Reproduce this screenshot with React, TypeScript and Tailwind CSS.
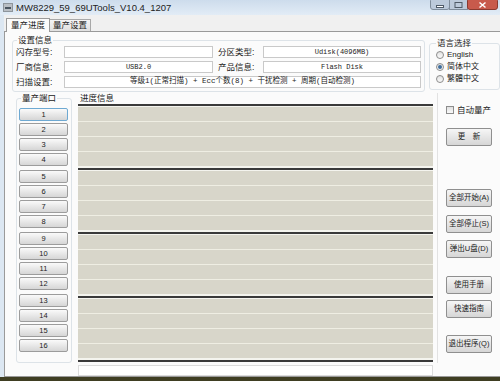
import React from "react"

const sans = "font-['Liberation_Sans','Noto_Sans_CJK_SC',sans-serif]"
const mono = "font-['Liberation_Mono','Noto_Sans_CJK_SC',monospace]"

function PortBtn({ n, focused }: { n: number; focused?: boolean }) {
  return (
    <div
      className={`h-[13px] w-[49px] flex items-center justify-center rounded-[2px] border ${
        focused ? "border-[#6ea9d2]" : "border-[#9c9c9c]"
      } bg-linear-to-b from-[#fafafa] to-[#d6d6d6] text-[7.5px] leading-none text-[#222]`}
    >
      {n}
    </div>
  )
}

function ActionBtn({ label, className = "" }: { label: string; className?: string }) {
  return (
    <div
      className={`h-[18px] w-[46px] flex items-center justify-center rounded-[2px] border border-[#8f8f8f] bg-linear-to-b from-[#f6f6f6] to-[#d6d6d6] text-[7.5px] leading-none text-[#222] whitespace-nowrap ${className}`}
    >
      {label}
    </div>
  )
}

function ProgressGroup() {
  return (
    <div className="flex flex-col">
      <div className="h-[2px] bg-[#3a3a3a]" />
      <div className="h-[1px] bg-[#f4f4ee]" />
      {[0, 1, 2, 3].map((i) => (
        <div key={i} className="flex flex-col">
          <div className="h-[14px] bg-[#d8d6ca]" />
          {i < 3 && <div className="h-[1px] bg-[#efeee3]" />}
        </div>
      ))}
      <div className="h-[2px] bg-[#f4f4ee]" />
    </div>
  )
}

function Radio({ label, checked }: { label: string; checked?: boolean }) {
  return (
    <div className="flex items-center h-[12px]">
      <div className="w-[8px] h-[8px] rounded-full border border-[#8c8c8c] bg-linear-to-b from-[#e2e2e2] to-[#fafafa] flex items-center justify-center">
        {checked && <div className="w-[4px] h-[4px] rounded-full bg-[#3e6d9c]" />}
      </div>
      <span className="ml-[3px] text-[8px] leading-none text-[#222]">{label}</span>
    </div>
  )
}

function WindowControls() {
  return (
    <svg width="68" height="10" viewBox="0 0 68 10" className="shrink-0 block">
      <rect x="0.5" y="-2" width="19" height="11.5" rx="2.5" fill="#bccadb" stroke="#7f8d9c" />
      <rect x="19.5" y="-2" width="18" height="11.5" fill="#bccadb" stroke="#7f8d9c" />
      <rect x="37.5" y="-2" width="30" height="11.5" rx="2.5" fill="#c85a4c" stroke="#8a3a30" />
      <rect x="6.5" y="5.5" width="7" height="2" fill="#fff" stroke="#4f5b68" />
      <rect x="25" y="2.5" width="7" height="5" fill="none" stroke="#4f5b68" />
      <path d="M49.5 2.5 L55.5 7.5 M55.5 2.5 L49.5 7.5" stroke="#fff" strokeWidth="1.5" />
    </svg>
  )
}

export default function App() {
  const groups = [
    [1, 2, 3, 4],
    [5, 6, 7, 8],
    [9, 10, 11, 12],
    [13, 14, 15, 16],
  ]

  return (
    <div className={`w-[500px] h-[381px] overflow-hidden bg-[#3f3e22] flex flex-col ${sans}`}>
      <div className="h-[377px] bg-[#dce7f2] flex flex-col">
        {/* Title bar */}
        <div className="h-[15px] shrink-0 flex justify-between items-start bg-linear-to-b from-[#cddcec] to-[#e2ecf6] pr-[2px]">
          <div className="flex items-start">
            <div className="mt-[3px] ml-[3px] w-[10px] h-[9px] bg-[#b9bec4] border border-[#8d949b] flex items-center justify-center">
              <div className="w-[6px] h-[2px] bg-[#4a5560]" />
            </div>
            <span className="ml-[3px] mt-[2px] text-[9.5px] leading-[11px] text-[#222]">MW8229_59_69UTools_V10.4_1207</span>
          </div>
          <WindowControls />
        </div>

        {/* Client */}
        <div className="flex-1 flex flex-col bg-[#f0f0f0] ml-[4px] pt-[2px]">
          {/* Tabs */}
          <div className="flex items-end h-[14px] pl-[2px]">
            <div className="h-[14px] px-[4px] border border-b-0 border-[#9a9a9a] bg-[#fbfbfb] text-[8.5px] leading-[13px] text-[#222] relative top-[1px]">
              量产进度
            </div>
            <div className="h-[12px] px-[3px] border border-b-0 border-l-0 border-[#a8a8a8] bg-linear-to-b from-[#f4f4f4] to-[#e0e0e0] text-[8.5px] leading-[11px] text-[#222]">
              量产设置
            </div>
          </div>

          {/* Panel */}
          <div className="flex-1 flex flex-col border border-r-0 border-[#9a9a9a] bg-[#fbfbfb]">
            {/* Top section */}
            <div className="h-[61px] flex items-start">
              <fieldset className="ml-[7px] mt-[3px] w-[412px] h-[57px] border border-[#dde3e8] rounded-[3px] px-[3px]">
                <legend className="ml-[1px] px-[1px] text-[8.5px] leading-[10px] text-[#222]">设置信息</legend>
                <div className="flex flex-col gap-[3px] mt-[1px] text-[8.5px] text-[#222]">
                  <div className="flex items-center h-[12px]">
                    <span className="w-[48px] leading-none">闪存型号:</span>
                    <div className="w-[149px] h-[12px] border border-[#c9c9c9] bg-white" />
                    <span className="ml-[5px] w-[45px] leading-none">分区类型:</span>
                    <div className={`w-[158px] h-[12px] border border-[#c9c9c9] bg-white flex items-center justify-center text-[7px] leading-none ${mono}`}>
                      Udisk(4096MB)
                    </div>
                  </div>
                  <div className="flex items-center h-[12px]">
                    <span className="w-[48px] leading-none">厂商信息:</span>
                    <div className={`w-[149px] h-[12px] border border-[#c9c9c9] bg-white flex items-center justify-center text-[7px] leading-none ${mono}`}>
                      USB2.0
                    </div>
                    <span className="ml-[5px] w-[45px] leading-none">产品信息:</span>
                    <div className={`w-[158px] h-[12px] border border-[#c9c9c9] bg-white flex items-center justify-center text-[7px] leading-none ${mono}`}>
                      Flash Disk
                    </div>
                  </div>
                  <div className="flex items-center h-[12px]">
                    <span className="w-[48px] leading-none">扫描设置:</span>
                    <div className={`w-[357px] h-[12px] border border-[#c9c9c9] bg-white flex items-center justify-center text-[7.5px] leading-none whitespace-nowrap ${mono}`}>
                      等级1(正常扫描) + Ecc个数(8) + 干扰检测 + 周期(自动检测)
                    </div>
                  </div>
                </div>
              </fieldset>

              <fieldset className="ml-[4px] mt-[6px] w-[80px] h-[52px] border border-[#dde3e8] rounded-[3px] pl-[6px]">
                <legend className="px-[1px] text-[8.5px] leading-[10px] text-[#222]">语言选择</legend>
                <div className="flex flex-col mt-[1px]">
                  <Radio label="English" />
                  <Radio label="简体中文" checked />
                  <Radio label="繁體中文" />
                </div>
              </fieldset>
            </div>

            {/* Bottom section */}
            <div className="flex items-start">
              <fieldset className="ml-[11px] w-[56px] h-[270px] border border-[#dde3e8] rounded-[3px] pl-[2px]">
                <legend className="ml-[2px] px-[1px] text-[8.5px] leading-[10px] text-[#222]">量产端口</legend>
                <div className="flex flex-col gap-[4px] mt-[5px]">
                  {groups.map((g, gi) => (
                    <div key={gi} className="flex flex-col gap-[2px]">
                      {g.map((n) => (
                        <PortBtn key={n} n={n} focused={n === 1} />
                      ))}
                    </div>
                  ))}
                </div>
              </fieldset>

              <div className="ml-[6px] w-[355px] flex flex-col">
                <div className="h-[11px] pl-[2px] text-[8.5px] leading-[10px] text-[#222]">进度信息</div>
                {groups.map((_, gi) => (
                  <ProgressGroup key={gi} />
                ))}
                <div className="h-[2px] bg-[#3a3a3a]" />
                <div className="mt-[3px] h-[11px] border border-[#dcdcdc] bg-white" />
              </div>

              <div className="ml-[4px] h-[270px] border-l border-[#e2e2e2] flex flex-col pl-[8px]">
                <div className="mt-[12px] flex items-center h-[10px]">
                  <div className="w-[8px] h-[8px] border border-[#8c8c8c] bg-linear-to-b from-[#e0e0e0] to-[#fafafa]" />
                  <span className="ml-[3px] text-[8.5px] leading-none text-[#222]">自动量产</span>
                </div>
                <ActionBtn label="更　新" className="mt-[13px]" />
                <ActionBtn label="全部开始(A)" className="mt-[43px]" />
                <ActionBtn label="全部停止(S)" className="mt-[8px]" />
                <ActionBtn label="弹出U盘(D)" className="mt-[7px]" />
                <ActionBtn label="使用手册" className="mt-[18px]" />
                <ActionBtn label="快速指南" className="mt-[6px]" />
                <ActionBtn label="退出程序(Q)" className="mt-[17px]" />
              </div>
            </div>
          </div>
        </div>
      </div>
    </div>
  )
}
